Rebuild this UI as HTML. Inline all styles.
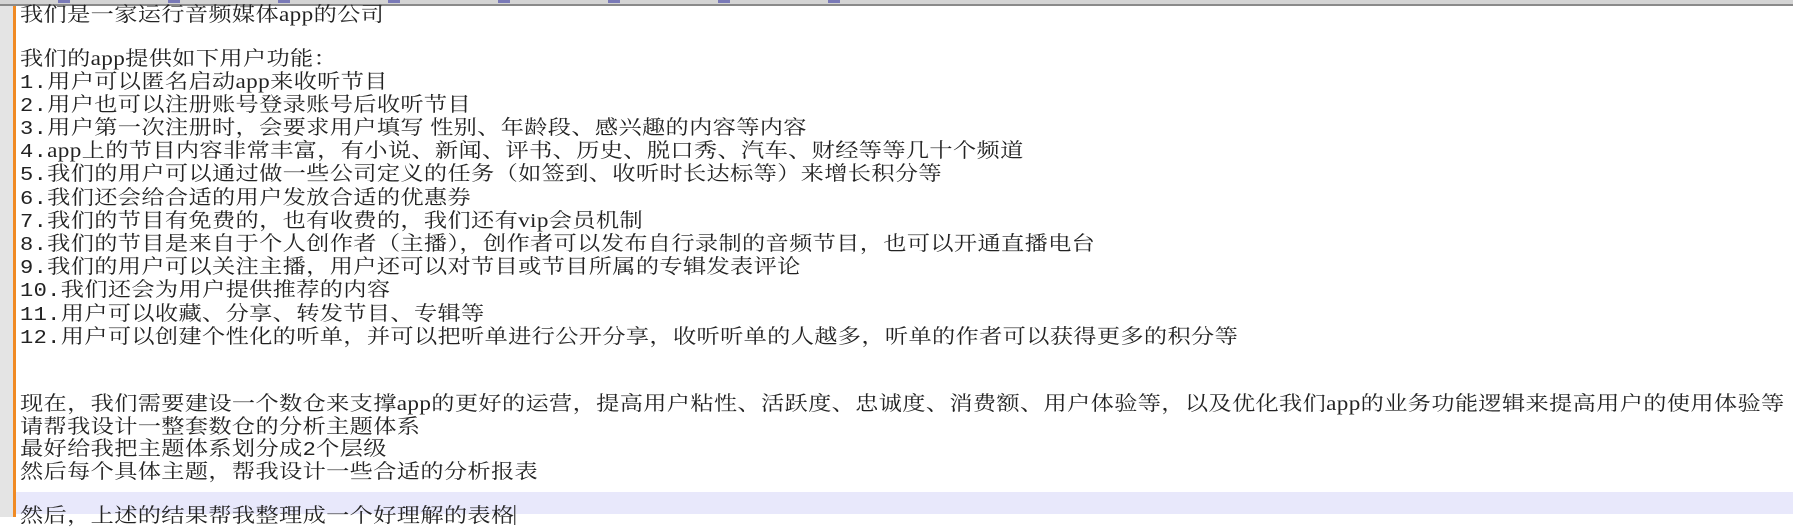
<!DOCTYPE html>
<html><head><meta charset="utf-8"><style>
html,body{margin:0;padding:0;width:1793px;height:517px;overflow:hidden;background:#fff}
.top{position:absolute;left:0;top:0;width:1793px;height:4px;background:#d4d4d4;border-bottom:2px solid #8a8a8a}
.ic{position:absolute;top:0;width:12px;height:3px;background:#7a7ab8}
.gut{position:absolute;left:0;top:6px;width:13px;height:511px;background:#e4e4e4}
.or{position:absolute;left:13px;top:6px;width:3px;height:511px;background:#f08a24}
.hl{position:absolute;left:16px;top:492px;width:1777px;height:22px;background:#e8e8fb}
.txt{position:absolute;left:20px;top:4px;font-family:"Liberation Serif","Noto Serif CJK SC",serif;font-size:20px;line-height:22.2px;color:#222;letter-spacing:0.3px;white-space:pre;transform:scaleX(1.16);transform-origin:0 0}
.m{font-family:"Liberation Mono",monospace;font-size:19px}
.cur{display:inline-block;width:1px;height:20px;background:#333;vertical-align:-3px}
</style></head><body>
<div class="top"></div>
<div class="ic" style="left:58px"></div><div class="ic" style="left:168px"></div><div class="ic" style="left:278px"></div><div class="ic" style="left:388px"></div><div class="ic" style="left:498px"></div><div class="ic" style="left:608px"></div><div class="ic" style="left:718px"></div><div class="ic" style="left:828px"></div>
<div class="gut"></div><div class="or"></div><div class="hl"></div>
<div class="txt">我们是一家运行音频媒体app的公司

我们的app提供如下用户功能：
<span class="m">1.</span>用户可以匿名启动app来收听节目
<span class="m">2.</span>用户也可以注册账号登录账号后收听节目
<span class="m">3.</span>用户第一次注册时，会要求用户填写 性别、年龄段、感兴趣的内容等内容
<span class="m">4.</span>app上的节目内容非常丰富，有小说、新闻、评书、历史、脱口秀、汽车、财经等等几十个频道
<span class="m">5.</span>我们的用户可以通过做一些公司定义的任务（如签到、收听时长达标等）来增长积分等
<span class="m">6.</span>我们还会给合适的用户发放合适的优惠券
<span class="m">7.</span>我们的节目有免费的，也有收费的，我们还有vip会员机制
<span class="m">8.</span>我们的节目是来自于个人创作者（主播），创作者可以发布自行录制的音频节目，也可以开通直播电台
<span class="m">9.</span>我们的用户可以关注主播，用户还可以对节目或节目所属的专辑发表评论
<span class="m">10.</span>我们还会为用户提供推荐的内容
<span class="m">11.</span>用户可以收藏、分享、转发节目、专辑等
<span class="m">12.</span>用户可以创建个性化的听单，并可以把听单进行公开分享，收听听单的人越多，听单的作者可以获得更多的积分等


现在，我们需要建设一个数仓来支撑app的更好的运营，提高用户粘性、活跃度、忠诚度、消费额、用户体验等，以及优化我们app的业务功能逻辑来提高用户的使用体验等
请帮我设计一整套数仓的分析主题体系
最好给我把主题体系划分成<span class="m">2</span>个层级
然后每个具体主题，帮我设计一些合适的分析报表

然后，上述的结果帮我整理成一个好理解的表格<span class="cur"></span></div>
</body></html>
